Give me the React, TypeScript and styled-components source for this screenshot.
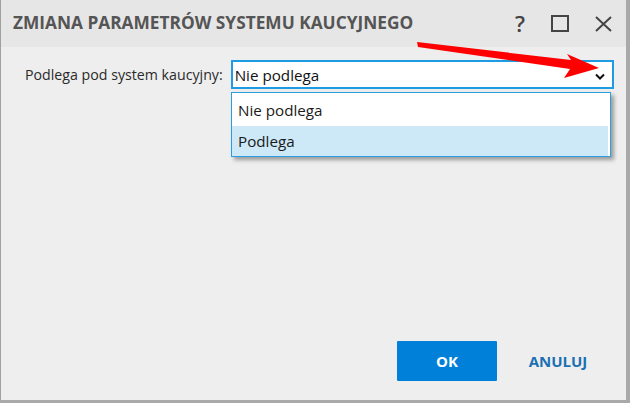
import React from "react";
import styled, { createGlobalStyle } from "styled-components";

const Global = createGlobalStyle`
  html, body { margin: 0; padding: 0; }
  body { background: #a9a9a9; width: 630px; height: 403px; overflow: hidden; font-family: "Open Sans", "Noto Sans", sans-serif; }
`;

const Window = styled.div`
  position: relative;
  width: 625px;
  height: 400px;
  border-left: 1px solid #a0a0a0;
  background: #eeeeee;
  display: flex;
  flex-direction: column;
`;

const TitleBar = styled.div`
  height: 47px;
  background: #e6e6e6;
  display: flex;
  align-items: center;
  padding-left: 12px;
  padding-right: 14px;
`;

const Title = styled.div`
  flex: 1;
  font-size: 17.3px;
  font-weight: 700;
  color: #555555;
  margin-top: -3px;
`;

const Controls = styled.div`
  display: flex;
  align-items: center;
  gap: 26px;
`;

const Help = styled.span`
  font-size: 22px;
  font-weight: 600;
  color: #444;
  line-height: 1;
  margin-top: -2px;
`;

const Body = styled.div`
  flex: 1;
  display: flex;
  flex-direction: column;
  padding: 13px 12px 19px 24px;
`;

const Row = styled.div`
  position: relative;
  display: flex;
  align-items: center;
  gap: 8px;
`;

const Label = styled.label`
  white-space: nowrap;
  font-size: 14.2px;
  color: #2a2a2a;
`;

const Select = styled.div`
  position: relative;
  flex-shrink: 0;
  box-sizing: border-box;
  width: 383px;
  height: 29px;
  border: 2px solid #1e9be3;
  background: #fff;
  display: flex;
  align-items: center;
  padding-left: 2px;
  font-size: 15.2px;
  color: #111;
`;

const Chevron = styled.svg`
  position: absolute;
  right: 7px;
  top: 11px;
`;

const Menu = styled.div`
  position: absolute;
  left: 206px;
  top: 32px;
  box-sizing: border-box;
  width: 380px;
  height: 65px;
  border: 1px solid #2a9fe0;
  background: #fff;
  box-shadow: 3px 3px 4px rgba(0, 0, 0, 0.35);
  display: flex;
  flex-direction: column;
  padding: 0 2px 0 0;
`;

const Item = styled.div<{ $active?: boolean }>`
  height: ${(p) => (p.$active ? 30 : 33)}px;
  display: flex;
  align-items: center;
  padding-left: 6px;
  font-size: 15.2px;
  color: #1a1a1a;
  background: ${(p) => (p.$active ? "#cde8f6" : "#fff")};
`;

const Footer = styled.div`
  margin-top: auto;
  display: flex;
  justify-content: flex-end;
  gap: 11px;
  padding-right: 6px;
`;

const Button = styled.button<{ $primary?: boolean }>`
  width: 100px;
  height: 40px;
  border: none;
  border-radius: 1px;
  font-family: "Open Sans", sans-serif;
  font-weight: 700;
  font-size: 15px;
  cursor: pointer;
  background: ${(p) => (p.$primary ? "#0080d8" : "transparent")};
  color: ${(p) => (p.$primary ? "#ffffff" : "#1b70b3")};
`;

const Arrow = styled.svg`
  position: absolute;
  left: 0;
  top: 0;
  pointer-events: none;
`;

export default function App() {
  return (
    <>
      <Global />
      <Window>
        <TitleBar>
          <Title>ZMIANA PARAMETRÓW SYSTEMU KAUCYJNEGO</Title>
          <Controls>
            <Help>?</Help>
            <svg width="18" height="17" viewBox="0 0 18 17">
              <rect x="1" y="1" width="16" height="15" fill="none" stroke="#444" strokeWidth="2" />
            </svg>
            <svg width="17" height="16" viewBox="0 0 17 16">
              <path d="M1 1 L16 15 M16 1 L1 15" stroke="#444" strokeWidth="2" />
            </svg>
          </Controls>
        </TitleBar>
        <Body>
          <Row>
            <Label>Podlega pod system kaucyjny:</Label>
            <Select>
              Nie podlega
              <Chevron width="10" height="7" viewBox="0 0 10 7">
                <path d="M1 1.5 L5 5.5 L9 1.5" fill="none" stroke="#111" strokeWidth="2" />
              </Chevron>
            </Select>
            <Menu>
              <Item>Nie podlega</Item>
              <Item $active>Podlega</Item>
            </Menu>
          </Row>
          <Footer>
            <Button $primary>OK</Button>
            <Button>ANULUJ</Button>
          </Footer>
        </Body>
        <Arrow width="630" height="403" viewBox="0 0 630 403">
          <polygon
            points="416,42 570,60 566,54 598,68 563,78 569,69 417,47"
            fill="#ff0000"
          />
        </Arrow>
      </Window>
    </>
  );
}
